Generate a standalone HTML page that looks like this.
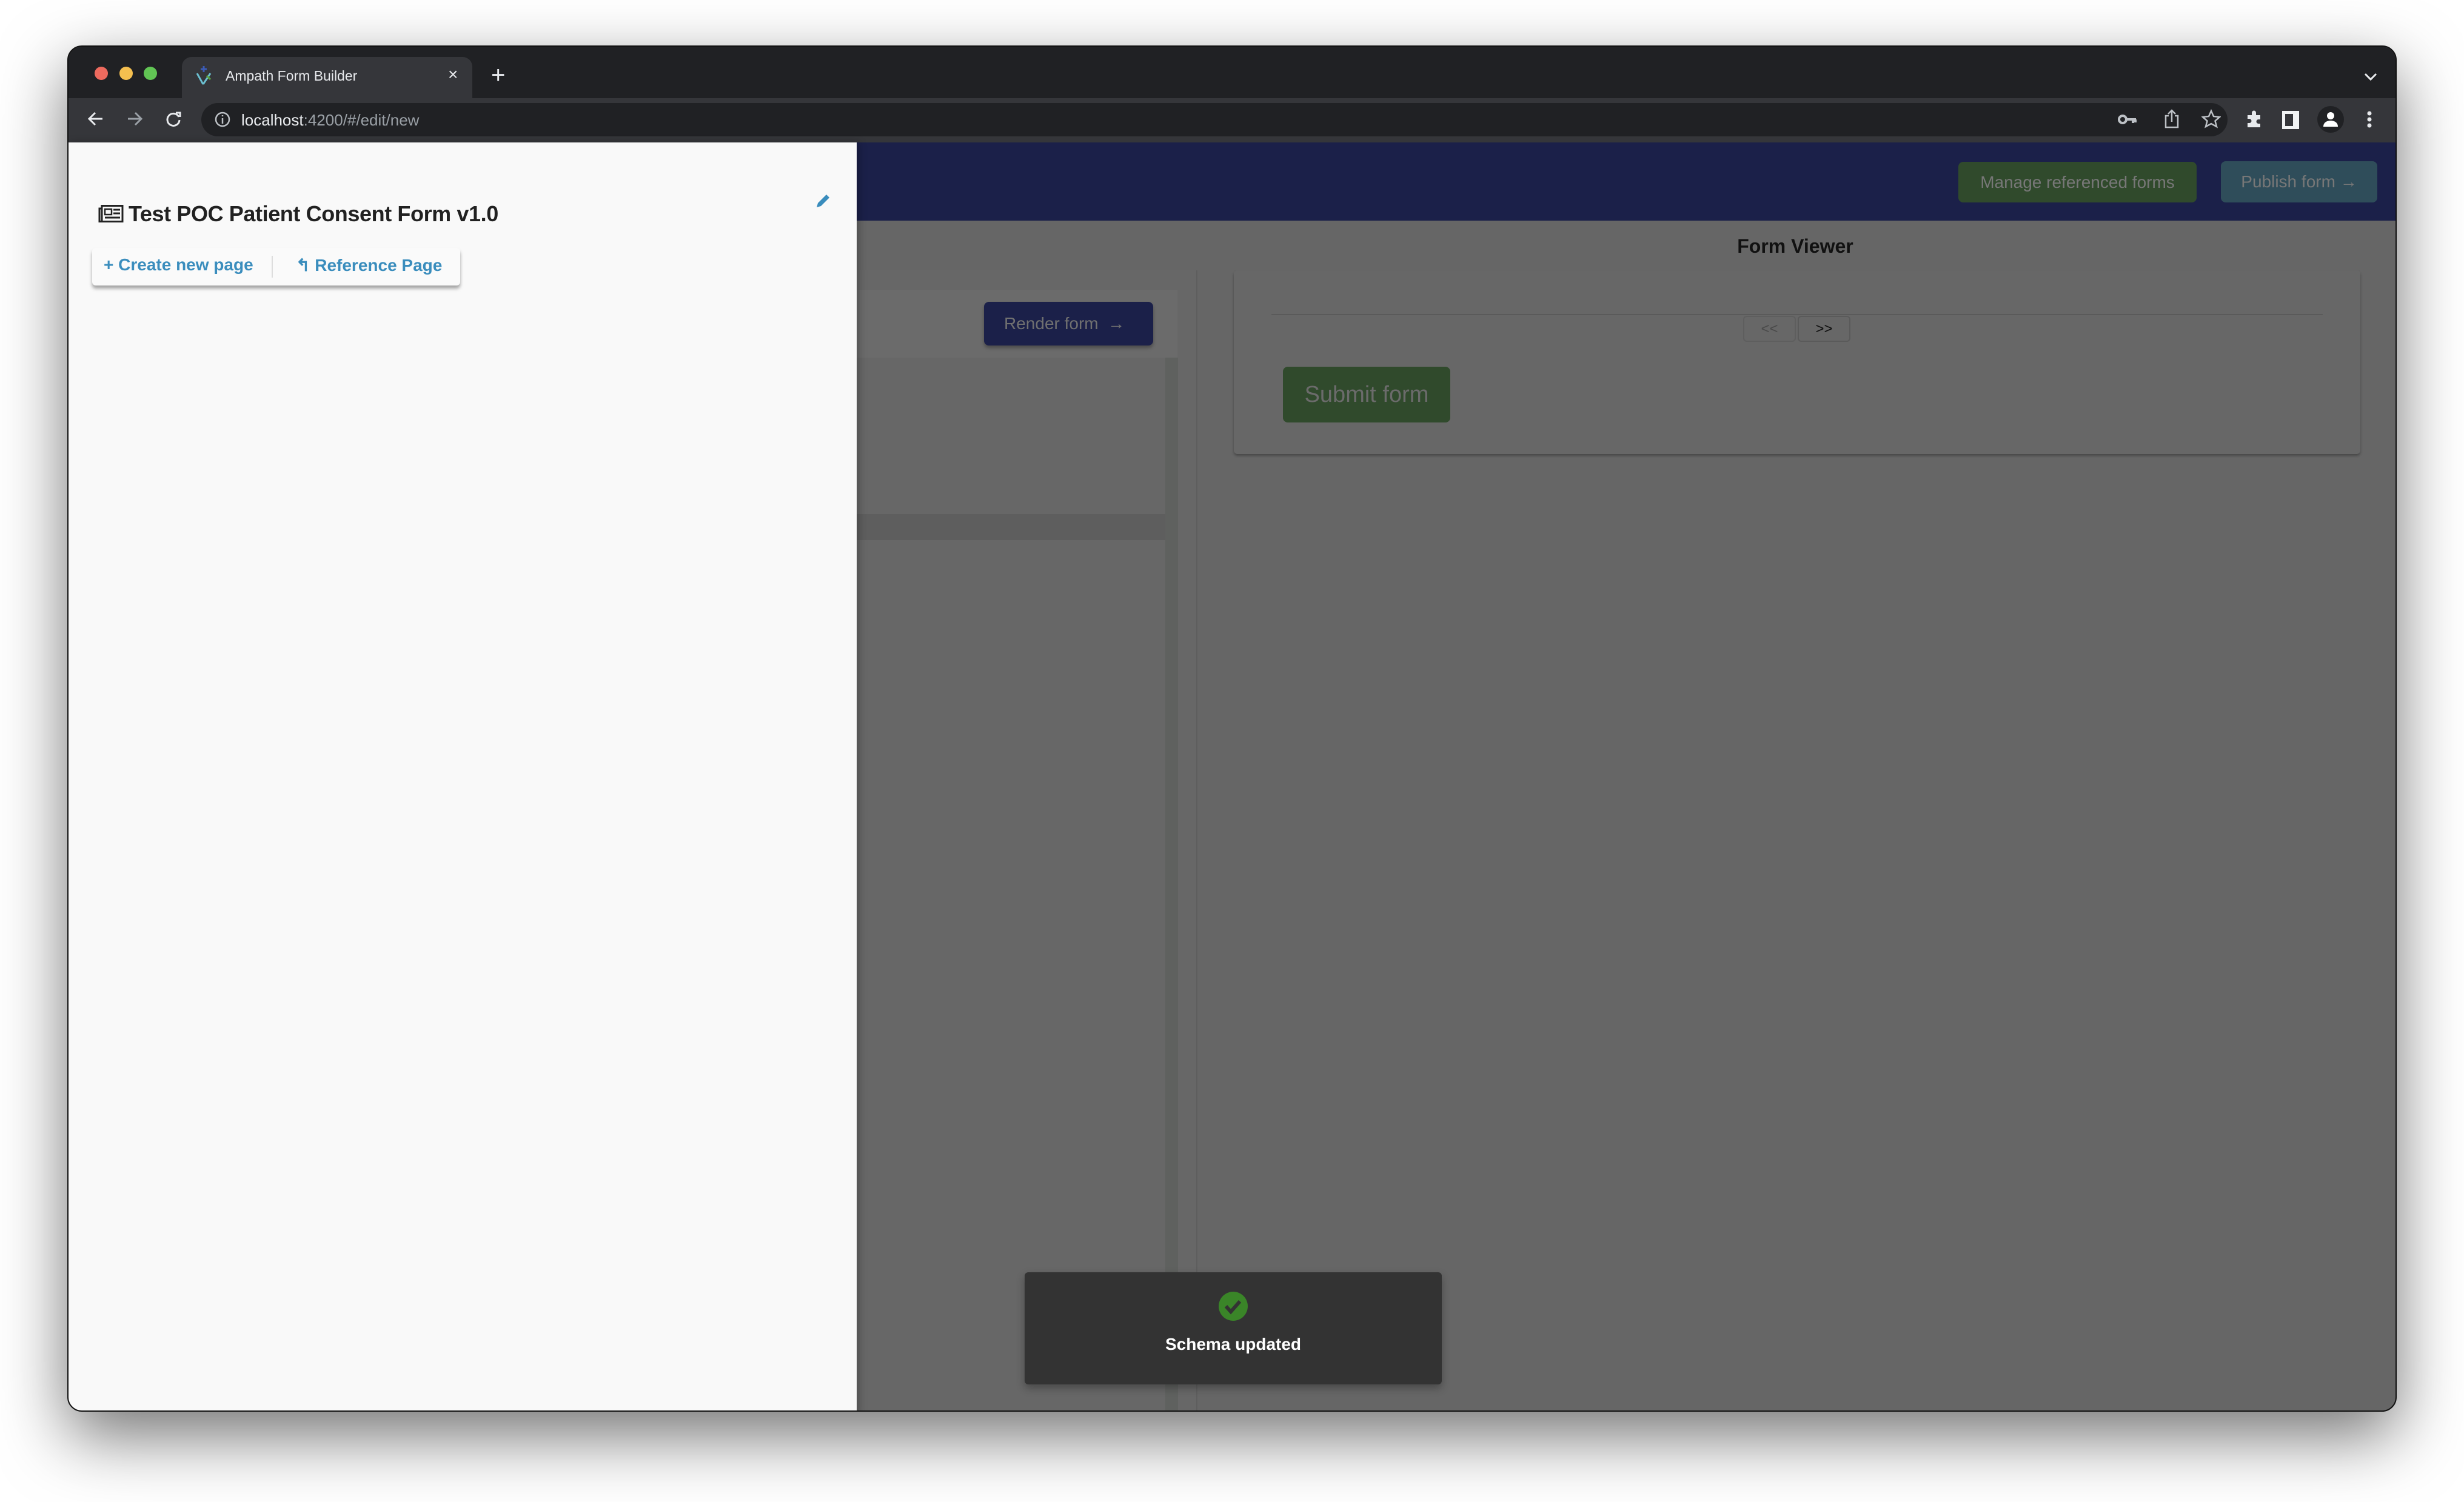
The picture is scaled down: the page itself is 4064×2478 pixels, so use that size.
<!DOCTYPE html>
<html><head><meta charset="utf-8"><style>
*{box-sizing:border-box;margin:0;padding:0}
body{width:4064px;height:2478px;background:#fff;position:relative;overflow:hidden;font-family:"Liberation Sans",sans-serif}
.abs{position:absolute}
#win{left:111px;top:75px;width:3842px;height:2254px;border-radius:24px;overflow:hidden;background:#666;border:2px solid #111;box-shadow:0 40px 110px rgba(0,0,0,.55)}
</style></head><body>
<div id="win" class="abs">
 <div class="abs" style="left:0;top:0;width:100%;height:85px;background:#202124"></div>
 <div class="abs" style="left:43px;top:33px;width:22px;height:22px;border-radius:50%;background:#ed6a5e"></div>
 <div class="abs" style="left:84px;top:33px;width:22px;height:22px;border-radius:50%;background:#f4bf4f"></div>
 <div class="abs" style="left:124px;top:33px;width:22px;height:22px;border-radius:50%;background:#61c554"></div>
 <div class="abs" style="left:187px;top:17px;width:479px;height:70px;background:#35363a;border-radius:16px 16px 0 0"></div>
 <svg class="abs" style="left:208px;top:30px" width="30" height="34" viewBox="0 0 30 34"><path d="M15 2v10M10 7h10" stroke="#3b5bb5" stroke-width="3"/><path d="M4 14l10 18M26 14l-12 18" stroke="#6bbfd0" stroke-width="3"/><path d="M20 18l6 6" stroke="#5aa540" stroke-width="3"/></svg>
 <div class="abs" style="left:259px;top:35px;color:#e8eaed;font-size:23px">Ampath Form Builder</div>
 <div class="abs" style="left:626px;top:30px;color:#e8eaed;font-size:28px">×</div>
 <div class="abs" style="left:697px;top:25px;color:#e8eaed;font-size:40px;font-weight:300">+</div>
 <svg class="abs" style="left:3785px;top:42px" width="24" height="16"><path d="M3 3l9 9 9-9" stroke="#e8eaed" stroke-width="3" fill="none"/></svg>
 <div class="abs" style="left:0;top:85px;width:100%;height:73px;background:#35363a"></div>
 <svg class="abs" style="left:30px;top:104px" width="30" height="30"><path d="M26 15H5M14 5L4 15l10 10" stroke="#e8eaed" stroke-width="3" fill="none"/></svg>
 <svg class="abs" style="left:94px;top:104px" width="30" height="30"><path d="M4 15h21M16 5l10 10-10 10" stroke="#9aa0a6" stroke-width="3" fill="none"/></svg>
 <svg class="abs" style="left:158px;top:104px" width="30" height="30"><path d="M24 12A10 10 0 1 0 25 17" stroke="#e8eaed" stroke-width="3" fill="none"/><path d="M19 5h7v7" stroke="#e8eaed" stroke-width="3" fill="none"/></svg>
 <div class="abs" style="left:219px;top:93px;width:3342px;height:55px;border-radius:28px;background:#202124"></div>
 <svg class="abs" style="left:240px;top:106px" width="28" height="28"><circle cx="14" cy="14" r="11" stroke="#bdc1c6" stroke-width="2.5" fill="none"/><path d="M14 12v9M14 7v2" stroke="#bdc1c6" stroke-width="2.5"/></svg>
 <div class="abs" style="left:285px;top:106px;font-size:26px;color:#e8eaed">localhost<span style="color:#9aa0a6">:4200/#/edit/new</span></div>
 <svg class="abs" style="left:3380px;top:108px" width="32" height="24"><circle cx="8" cy="12" r="6" stroke="#bdc1c6" stroke-width="4" fill="none"/><path d="M14 12h16M25 12v6M29 12v5" stroke="#bdc1c6" stroke-width="4"/></svg>
 <svg class="abs" style="left:3455px;top:102px" width="28" height="34"><path d="M9 12H4v19h20V12h-5M14 22V3M8 9l6-6 6 6" stroke="#bdc1c6" stroke-width="2.5" fill="none"/></svg>
 <svg class="abs" style="left:3518px;top:103px" width="32" height="32"><path d="M16 3l4 9 10 1-7.5 6.5L25 29l-9-5-9 5 2.5-9.5L2 13l10-1z" stroke="#bdc1c6" stroke-width="2.5" fill="none"/></svg>
 <svg class="abs" style="left:3590px;top:103px" width="32" height="32"><path d="M4 10h7V6a3.5 3.5 0 0 1 7 0v4h7v7h-3a3.5 3.5 0 0 0 0 7h3v6H4v-7h3a3.5 3.5 0 0 0 0-7H4z" fill="#e8eaed"/></svg>
 <div class="abs" style="left:3651px;top:106px;width:28px;height:30px;border:5px solid #f1f3f4;border-right-width:10px"></div>
 <div class="abs" style="left:3709px;top:98px;width:44px;height:44px;border-radius:50%;background:#202124"></div>
 <svg class="abs" style="left:3717px;top:105px" width="28" height="28"><circle cx="14" cy="9" r="6" fill="#fff"/><path d="M2 27c0-7 6-10 12-10s12 3 12 10z" fill="#fff"/></svg>
 <svg class="abs" style="left:3790px;top:105px" width="10" height="32"><circle cx="5" cy="5" r="3.5" fill="#e8eaed"/><circle cx="5" cy="15" r="3.5" fill="#e8eaed"/><circle cx="5" cy="25" r="3.5" fill="#e8eaed"/></svg>
 <div class="abs" style="left:0;top:158px;width:100%;height:129px;background:#1b2049"></div>
 <div class="abs" style="left:3117px;top:190px;width:393px;height:67px;background:#304a2c;border-radius:8px;color:#777;font-size:28px;line-height:67px;text-align:center">Manage referenced forms</div>
 <div class="abs" style="left:3550px;top:189px;width:258px;height:68px;background:#2f4d5a;border-radius:8px;color:#777;font-size:28px;line-height:68px;text-align:center">Publish form →</div>
 <div class="abs" style="left:2708px;top:311px;width:280px;text-align:center;font-size:32px;font-weight:bold;color:#111">Form Viewer</div>
 <div class="abs" style="left:1280px;top:369px;width:582px;height:1900px;background:#676767;border-right:2px solid #5e5e5e"></div>
 <div class="abs" style="left:1280px;top:401px;width:549px;height:112px;background:#6b6b6b"></div>
 <div class="abs" style="left:1510px;top:421px;width:279px;height:72px;background:#1b2049;border-radius:8px;color:#707070;font-size:28px;line-height:72px;padding-left:33px;box-shadow:0 4px 6px rgba(0,0,0,.3)">Render form &nbsp;→</div>
 <div class="abs" style="left:1280px;top:771px;width:529px;height:43px;background:#5e5e5e"></div>
 <div class="abs" style="left:1809px;top:513px;width:21px;height:1800px;background:#5f615f"></div>
 <div class="abs" style="left:1922px;top:369px;width:1858px;height:303px;background:#676767;border-radius:6px;box-shadow:0 3px 4px rgba(0,0,0,.3)"></div>
 <div class="abs" style="left:1984px;top:441px;width:1734px;height:2px;background:#5a5a5a"></div>
 <div class="abs" style="left:2762px;top:444px;width:87px;height:43px;border:2px solid #5e5e5e;border-radius:6px;color:#4a4a4a;font-size:24px;line-height:39px;text-align:center">&lt;&lt;</div>
 <div class="abs" style="left:2852px;top:444px;width:87px;height:43px;border:2px solid #5a5a5a;border-radius:6px;color:#111;font-size:24px;line-height:39px;text-align:center">&gt;&gt;</div>
 <div class="abs" style="left:2003px;top:528px;width:276px;height:92px;background:#304a2c;border-radius:8px;color:#6b6b6b;font-size:38px;line-height:92px;text-align:center">Submit form</div>
 <div class="abs" style="left:0;top:158px;width:1300px;height:2100px;background:#f9f9f9;box-shadow:4px 0 12px rgba(0,0,0,.25)"></div>
 <svg class="abs" style="left:49px;top:261px" width="42" height="29" viewBox="0 0 42 29"><rect x="6" y="1.5" width="34" height="26" fill="none" stroke="#222" stroke-width="3"/><path d="M6 6H2v21.5h4" fill="none" stroke="#222" stroke-width="3"/><rect x="11" y="7" width="11" height="9" fill="none" stroke="#222" stroke-width="2.5"/><path d="M25 8h11M25 14h11M11 21h25" stroke="#222" stroke-width="3"/></svg>
 <div class="abs" style="left:99px;top:255px;font-size:36px;letter-spacing:-0.4px;font-weight:bold;color:#212121">Test POC Patient Consent Form v1.0</div>
 <svg class="abs" style="left:1230px;top:239px" width="30" height="30"><path d="M4 26l2-7 14-14 5 5-14 14z" fill="#3a8dbd"/></svg>
 <div class="abs" style="left:39px;top:332px;width:607px;height:62px;background:#fafafa;border-radius:6px;box-shadow:0 5px 6px rgba(0,0,0,.35)"></div>
 <div class="abs" style="left:58px;top:344px;font-size:28px;font-weight:bold;color:#3a8dbd">+ Create new page</div>
 <div class="abs" style="left:335px;top:345px;width:2px;height:36px;background:#ddd"></div>
 <div class="abs" style="left:375px;top:344px;font-size:28px;font-weight:bold;color:#3a8dbd">↰ Reference Page</div>
 <div class="abs" style="left:1577px;top:2022px;width:688px;height:185px;background:#333;border-radius:6px;box-shadow:0 6px 14px rgba(0,0,0,.3)"></div>
 <svg class="abs" style="left:1897px;top:2054px" width="48" height="48"><circle cx="24" cy="24" r="24" fill="#3a8528"/><path d="M12 24l8 9 15-17" stroke="#333" stroke-width="6" fill="none"/></svg>
 <div class="abs" style="left:1577px;top:2125px;width:688px;text-align:center;color:#fff;font-size:28px;font-weight:bold">Schema updated</div>
</div>
</body></html>
